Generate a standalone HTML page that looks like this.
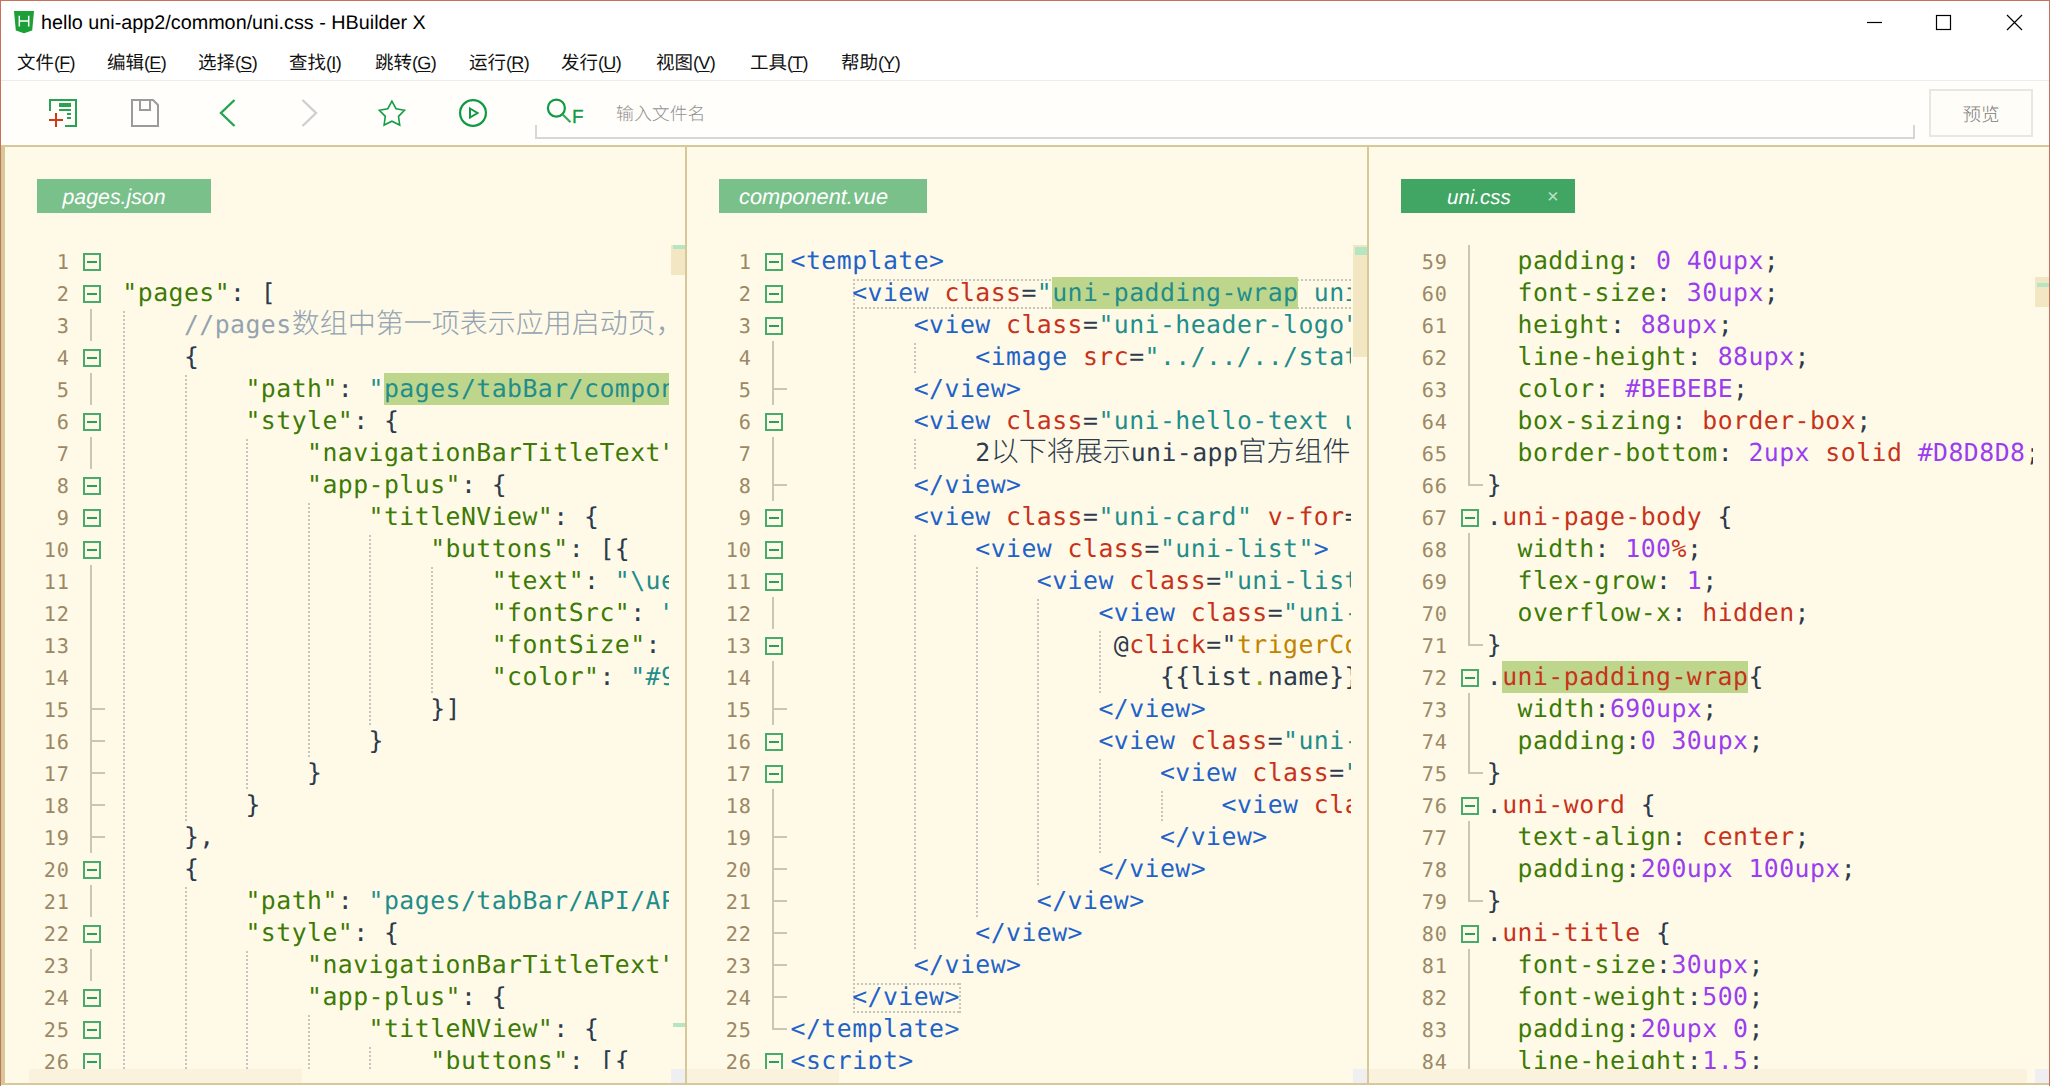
<!DOCTYPE html>
<html lang="zh-CN">
<head>
<meta charset="utf-8">
<title>hello uni-app2/common/uni.css - HBuilder X</title>
<style>
html,body{margin:0;padding:0}
body{width:2050px;height:1086px;overflow:hidden;background:#fff;position:relative;
 font-family:"Liberation Sans","Noto Sans CJK SC",sans-serif;color:#000;text-rendering:geometricPrecision}
b,i{font-weight:normal;font-style:normal}
.abs,.win b,.win div,.win span.abs{position:absolute}
.win{position:absolute;left:0;top:0;width:2050px;height:1086px;overflow:hidden}
/* window frame */
.frame-t{left:0;top:0;width:2050px;height:1px;background:#c9705a}
.frame-l{left:0;top:0;width:1px;height:1086px;background:#c9705a}
.frame-r{left:2049px;top:0;width:1px;height:1086px;background:#c9705a}
/* title */
.title{left:41px;top:9px;height:28px;line-height:28px;font-size:19.8px;color:#000;white-space:nowrap}
.menu{top:49px;height:28px;line-height:28px;font-size:18.5px;white-space:nowrap;color:#111}
.menu u{text-decoration:underline;text-underline-offset:2px;text-decoration-thickness:1px}
.ml{position:static;font-size:18px;letter-spacing:-.7px}
.msep{left:1px;top:80px;width:2048px;height:1px;background:#ececec}
.tbar{left:1px;top:81px;width:2048px;height:64px;background:#fffefa}
.edge-t{left:1px;top:145px;width:2048px;height:2px;background:#d6c899}
.edge-l{left:1px;top:145px;width:4px;height:940px;background:#d6c899}
.edge-b{left:1px;top:1083px;width:2048px;height:2px;background:#d6c899}
.edbg{left:5px;top:147px;width:2044px;height:936px;background:#fffae8}
.split{top:147px;width:2px;height:936px;background:#d6c899}
.tab{top:179px;height:34px;line-height:36.5px;color:#fff;font-style:italic;font-size:21px;white-space:nowrap;background:#79c08b}
.tab span{position:absolute;top:0}
.tab.on{background:#41a663}
/* scrollbars */
.vth{width:14px;background:#f3e6c3}
.mk{background:#b4e6c4}
.hth{top:1069px;height:14px;background:#faf2dc}
.cor{top:1069px;width:14px;height:14px;background:#efeff1}
/* editor */
.ed{left:0;top:245px;width:2050px;height:824px;overflow:hidden}
.nums{top:.5px;text-align:right;font-family:"DejaVu Sans Mono", "Liberation Mono", monospace;font-size:20.2px;letter-spacing:1px;color:#9b8966}
.nums div{position:static;height:32px;line-height:32px}
.fb{width:14px;height:14px;border:2px solid #47ac6a}
.fb:after{content:"";position:absolute;left:2px;top:6px;width:10px;height:2px;background:#2aa054}
.fv{width:2px;height:32px;background:#c9c6b8}
.fh{width:13px;height:2px;background:#c9c6b8}
.code{top:0;height:824px;overflow:hidden}
.ln{height:32px;line-height:32px;white-space:pre;font-family:"DejaVu Sans Mono", "Liberation Mono", monospace;font-size:24.8px;letter-spacing:.459px;color:#2c3b4d}
.ln span{position:static}
  .z{letter-spacing:0;font-family:"Noto Sans CJK SC",sans-serif;font-size:28px;font-weight:300;line-height:0}
.ig{width:2px;background-image:linear-gradient(#c6c6c0 50%,transparent 50%);background-size:2px 4px;background-position:0 2px}
.tb{height:30px;background:linear-gradient(90deg,#c6c6ba 50%,transparent 50%) 0 0/4px 2px repeat-x,linear-gradient(90deg,#c6c6ba 50%,transparent 50%) 0 100%/4px 2px repeat-x,linear-gradient(#c6c6ba 50%,transparent 50%) 0 0/2px 4px repeat-y,linear-gradient(#c6c6ba 50%,transparent 50%) 100% 0/2px 4px repeat-y}
.k{color:#3d7a06}.p{color:#2c3b4d}.s{color:#1f8d8b}.c{color:#93a2b1}.t{color:#1f63c9}.a{color:#c8321a}
.n{color:#9a3df0}.o{color:#c18401}.d{color:#2c3b4d}.dot{color:#8a9a05}
.hl{background:#bdd68c;display:inline-block;height:32px;line-height:32px;vertical-align:top}
</style>
</head>
<body>
<div class="win">
<div class="edbg"></div>
<div class="tbar"></div>
<div class="msep"></div>
<div class="edge-t"></div><div class="edge-l"></div><div class="edge-b"></div>
<div class="split" style="left:685px"></div><div class="split" style="left:1367px"></div>

<!-- title bar -->
<svg class="abs" style="left:13px;top:10px" width="24" height="24" viewBox="0 0 24 24"><path d="M1 1h20l-1.800 19.500-8.200 2.700-8.200-2.700z" fill="#1d9f38"/><path d="M6.300 5.800v10.600M15.700 5.800v10.600M6.300 11h9.400" stroke="#fff" stroke-width="1.500" fill="none"/></svg>
<div class="title">hello uni-app2/common/uni.css - HBuilder X</div>
<svg class="abs" style="left:1860px;top:10px" width="170" height="26" viewBox="0 0 170 26" fill="none" stroke="#000" stroke-width="1.200"><path d="M7 12.500h15"/><rect x="76.500" y="5.500" width="14" height="14"/><path d="M147 5l15 15M162 5l-15 15"/></svg>

<!-- menu -->
<div class="menu" style="left:17px">文件<span class="ml">(<u>F</u>)</span></div>
<div class="menu" style="left:107px">编辑<span class="ml">(<u>E</u>)</span></div>
<div class="menu" style="left:198px">选择<span class="ml">(<u>S</u>)</span></div>
<div class="menu" style="left:289px">查找<span class="ml">(<u>I</u>)</span></div>
<div class="menu" style="left:375px">跳转<span class="ml">(<u>G</u>)</span></div>
<div class="menu" style="left:469px">运行<span class="ml">(<u>R</u>)</span></div>
<div class="menu" style="left:561px">发行<span class="ml">(<u>U</u>)</span></div>
<div class="menu" style="left:656px">视图<span class="ml">(<u>V</u>)</span></div>
<div class="menu" style="left:750px">工具<span class="ml">(<u>T</u>)</span></div>
<div class="menu" style="left:841px">帮助<span class="ml">(<u>Y</u>)</span></div>

<!-- toolbar -->
<svg class="abs" style="left:40px;top:90px" width="560" height="46" viewBox="40 90 560 46" fill="none" stroke-width="2">
<!-- new file -->
<g stroke="#26a453"><path d="M50 111V100H76V126H65"/><path d="M59 105h12" stroke-width="4"/><path d="M59 110h12"/><path d="M67 114h4M67 118h4"/></g>
<path d="M56 113v14M49 120h14" stroke="#d2391b"/>
<!-- save -->
<path d="M132 100h21l5 5v21h-26zM140 100v10h10v-10" stroke="#9b9b9b"/>
<!-- back / forward -->
<path d="M234.500 100L221 113l13.500 13" stroke="#26a453" stroke-width="2.400"/>
<path d="M302.500 100L316 113l-13.500 13" stroke="#cfcfcf" stroke-width="2.400"/>
<!-- star -->
<path d="M391.9 101.1 L396.0 108.7 L404.5 110.2 L398.5 116.4 L399.7 125.0 L391.9 121.2 L384.1 125.0 L385.3 116.4 L379.3 110.2 L387.8 108.7Z" stroke="#169c47" stroke-width="1.600" stroke-linejoin="miter"/>
<!-- run -->
<circle cx="473" cy="113" r="12.900" stroke="#109a43" stroke-width="2.200"/><path d="M470 108.500L477.500 113L470 117.500Z" stroke="#109a43"/>
<!-- search -->
<circle cx="556.400" cy="108.100" r="8.500" stroke="#109a43" stroke-width="2.200"/><path d="M562.500 114.300l8 8" stroke="#35a75f" stroke-width="2.200"/>
</svg>
<div class="abs" style="left:572px;top:106.5px;height:22px;line-height:22px;font-size:19px;color:#109a43;-webkit-text-stroke:.3px #109a43">F</div>
<div class="abs" style="left:535px;top:125px;width:2px;height:14px;background:#d6d6d8"></div>
<div class="abs" style="left:535px;top:137px;width:1380px;height:2px;background:#d6d6d8"></div>
<div class="abs" style="left:1913px;top:125px;width:2px;height:14px;background:#d6d6d8"></div>
<div class="abs" style="left:616px;top:101px;height:26px;line-height:26px;font-size:17.900px;font-weight:300;color:#929292;white-space:nowrap">输入文件名</div>
<div class="abs" style="left:1929px;top:89px;width:100px;height:44px;border:2px solid #e9e7e1;background:#fffdf7;line-height:48px;text-align:center;font-size:18.500px;font-weight:300;color:#7c7c7c">预览</div>


<!-- tabs -->
<div class="tab" style="left:37px;width:174px"><span style="left:25.5px;font-size:21.3px">pages.json</span></div>
<div class="tab" style="left:719px;width:208px"><span style="left:20px;font-size:21.8px">component.vue</span></div>
<div class="tab on" style="left:1401px;width:174px"><span style="left:46px;top:1px;font-size:20.5px">uni.css</span><span style="left:146px;top:.3px;font-style:normal;font-size:20px;color:#bfe2ca">×</span></div>

<!-- scrollbars -->
<div class="vth" style="left:671px;top:245px;height:30px"></div><div class="mk" style="left:673px;top:245px;width:12px;height:4px"></div>
<div class="mk" style="left:673px;top:1023px;width:12px;height:4px"></div>
<div class="vth" style="left:1353px;top:245px;height:112px"></div><div class="mk" style="left:1355px;top:247px;width:12px;height:8px"></div>
<div class="vth" style="left:2035px;top:277px;height:30px"></div><div class="mk" style="left:2037px;top:283px;width:12px;height:4px"></div>
<div class="hth" style="left:29px;width:273px"></div><div class="cor" style="left:671px"></div>
<div class="hth" style="left:687px;width:152px"></div><div class="cor" style="left:1353px"></div>
<div class="hth" style="left:1369px;width:658px"></div><div class="cor" style="left:2035px"></div>

<!-- editors -->
<div class="ed">
<div class="nums" style="left:5px;width:65px">
<div>1</div>
<div>2</div>
<div>3</div>
<div>4</div>
<div>5</div>
<div>6</div>
<div>7</div>
<div>8</div>
<div>9</div>
<div>10</div>
<div>11</div>
<div>12</div>
<div>13</div>
<div>14</div>
<div>15</div>
<div>16</div>
<div>17</div>
<div>18</div>
<div>19</div>
<div>20</div>
<div>21</div>
<div>22</div>
<div>23</div>
<div>24</div>
<div>25</div>
<div>26</div>
</div>
<b class="fb" style="left:83px;top:8px"></b>
<b class="fb" style="left:83px;top:40px"></b>
<b class="fv" style="left:90px;top:64px"></b>
<b class="fb" style="left:83px;top:104px"></b>
<b class="fv" style="left:90px;top:128px"></b>
<b class="fb" style="left:83px;top:168px"></b>
<b class="fv" style="left:90px;top:192px"></b>
<b class="fb" style="left:83px;top:232px"></b>
<b class="fb" style="left:83px;top:264px"></b>
<b class="fb" style="left:83px;top:296px"></b>
<b class="fv" style="left:90px;top:320px"></b>
<b class="fv" style="left:90px;top:352px"></b>
<b class="fv" style="left:90px;top:384px"></b>
<b class="fv" style="left:90px;top:416px"></b>
<b class="fv" style="left:90px;top:448px"></b>
<b class="fh" style="left:92px;top:463px"></b>
<b class="fv" style="left:90px;top:480px"></b>
<b class="fh" style="left:92px;top:495px"></b>
<b class="fv" style="left:90px;top:512px"></b>
<b class="fh" style="left:92px;top:527px"></b>
<b class="fv" style="left:90px;top:544px"></b>
<b class="fh" style="left:92px;top:559px"></b>
<b class="fv" style="left:90px;top:576px"></b>
<b class="fh" style="left:92px;top:591px"></b>
<b class="fb" style="left:83px;top:616px"></b>
<b class="fv" style="left:90px;top:640px"></b>
<b class="fb" style="left:83px;top:680px"></b>
<b class="fv" style="left:90px;top:704px"></b>
<b class="fb" style="left:83px;top:744px"></b>
<b class="fb" style="left:83px;top:776px"></b>
<b class="fb" style="left:83px;top:808px"></b>
<div class="code" style="left:103px;width:566px">
<b class="ig" style="left:20.0px;top:64px;height:768px"></b>
<b class="ig" style="left:82.0px;top:128px;height:448px"></b>
<b class="ig" style="left:82.0px;top:640px;height:192px"></b>
<b class="ig" style="left:143.0px;top:192px;height:352px"></b>
<b class="ig" style="left:143.0px;top:704px;height:128px"></b>
<b class="ig" style="left:205.0px;top:256px;height:256px"></b>
<b class="ig" style="left:205.0px;top:768px;height:64px"></b>
<b class="ig" style="left:266.0px;top:288px;height:192px"></b>
<b class="ig" style="left:266.0px;top:800px;height:32px"></b>
<b class="ig" style="left:328.0px;top:320px;height:128px"></b>
<div class="ln" style="left:-42.20px;top:0px"><span class="p">{</span></div>
<div class="ln" style="left:19.36px;top:32px"><span class="k">"pages"</span><span class="p">: [</span></div>
<div class="ln" style="left:80.92px;top:64px"><span class="c">//pages<i class="z">数组中第一项表示应用启动页，后面顺序随意</i></span></div>
<div class="ln" style="left:80.92px;top:96px"><span class="p">{</span></div>
<div class="ln" style="left:142.48px;top:128px"><span class="k">"path"</span><span class="p">: </span><span class="s">"</span><span class="s hl">pages/tabBar/component/component</span><span class="s">"</span><span class="p">,</span></div>
<div class="ln" style="left:142.48px;top:160px"><span class="k">"style"</span><span class="p">: {</span></div>
<div class="ln" style="left:204.04px;top:192px"><span class="k">"navigationBarTitleText"</span><span class="p">: </span><span class="s">"<i class="z">内置组件</i>"</span><span class="p">,</span></div>
<div class="ln" style="left:204.04px;top:224px"><span class="k">"app-plus"</span><span class="p">: {</span></div>
<div class="ln" style="left:265.60px;top:256px"><span class="k">"titleNView"</span><span class="p">: {</span></div>
<div class="ln" style="left:327.16px;top:288px"><span class="k">"buttons"</span><span class="p">: [{</span></div>
<div class="ln" style="left:388.72px;top:320px"><span class="k">"text"</span><span class="p">: </span><span class="s">"\ue534"</span><span class="p">,</span></div>
<div class="ln" style="left:388.72px;top:352px"><span class="k">"fontSrc"</span><span class="p">: </span><span class="s">"/static/uni.ttf"</span><span class="p">,</span></div>
<div class="ln" style="left:388.72px;top:384px"><span class="k">"fontSize"</span><span class="p">: </span><span class="s">"22px"</span><span class="p">,</span></div>
<div class="ln" style="left:388.72px;top:416px"><span class="k">"color"</span><span class="p">: </span><span class="s">"#999999"</span></div>
<div class="ln" style="left:327.16px;top:448px"><span class="p">}]</span></div>
<div class="ln" style="left:265.60px;top:480px"><span class="p">}</span></div>
<div class="ln" style="left:204.04px;top:512px"><span class="p">}</span></div>
<div class="ln" style="left:142.48px;top:544px"><span class="p">}</span></div>
<div class="ln" style="left:80.92px;top:576px"><span class="p">},</span></div>
<div class="ln" style="left:80.92px;top:608px"><span class="p">{</span></div>
<div class="ln" style="left:142.48px;top:640px"><span class="k">"path"</span><span class="p">: </span><span class="s">"pages/tabBar/API/API"</span><span class="p">,</span></div>
<div class="ln" style="left:142.48px;top:672px"><span class="k">"style"</span><span class="p">: {</span></div>
<div class="ln" style="left:204.04px;top:704px"><span class="k">"navigationBarTitleText"</span><span class="p">: </span><span class="s">"<i class="z">接口</i>"</span><span class="p">,</span></div>
<div class="ln" style="left:204.04px;top:736px"><span class="k">"app-plus"</span><span class="p">: {</span></div>
<div class="ln" style="left:265.60px;top:768px"><span class="k">"titleNView"</span><span class="p">: {</span></div>
<div class="ln" style="left:327.16px;top:800px"><span class="k">"buttons"</span><span class="p">: [{</span></div>
</div>
<div class="nums" style="left:687px;width:65px">
<div>1</div>
<div>2</div>
<div>3</div>
<div>4</div>
<div>5</div>
<div>6</div>
<div>7</div>
<div>8</div>
<div>9</div>
<div>10</div>
<div>11</div>
<div>12</div>
<div>13</div>
<div>14</div>
<div>15</div>
<div>16</div>
<div>17</div>
<div>18</div>
<div>19</div>
<div>20</div>
<div>21</div>
<div>22</div>
<div>23</div>
<div>24</div>
<div>25</div>
<div>26</div>
</div>
<b class="fb" style="left:765px;top:8px"></b>
<b class="fb" style="left:765px;top:40px"></b>
<b class="fb" style="left:765px;top:72px"></b>
<b class="fv" style="left:772px;top:96px"></b>
<b class="fv" style="left:772px;top:128px"></b>
<b class="fh" style="left:774px;top:143px"></b>
<b class="fb" style="left:765px;top:168px"></b>
<b class="fv" style="left:772px;top:192px"></b>
<b class="fv" style="left:772px;top:224px"></b>
<b class="fh" style="left:774px;top:239px"></b>
<b class="fb" style="left:765px;top:264px"></b>
<b class="fb" style="left:765px;top:296px"></b>
<b class="fb" style="left:765px;top:328px"></b>
<b class="fv" style="left:772px;top:352px"></b>
<b class="fb" style="left:765px;top:392px"></b>
<b class="fv" style="left:772px;top:416px"></b>
<b class="fv" style="left:772px;top:448px"></b>
<b class="fh" style="left:774px;top:463px"></b>
<b class="fb" style="left:765px;top:488px"></b>
<b class="fb" style="left:765px;top:520px"></b>
<b class="fv" style="left:772px;top:544px"></b>
<b class="fv" style="left:772px;top:576px"></b>
<b class="fh" style="left:774px;top:591px"></b>
<b class="fv" style="left:772px;top:608px"></b>
<b class="fh" style="left:774px;top:623px"></b>
<b class="fv" style="left:772px;top:640px"></b>
<b class="fh" style="left:774px;top:655px"></b>
<b class="fv" style="left:772px;top:672px"></b>
<b class="fh" style="left:774px;top:687px"></b>
<b class="fv" style="left:772px;top:704px"></b>
<b class="fh" style="left:774px;top:719px"></b>
<b class="fv" style="left:772px;top:736px"></b>
<b class="fh" style="left:774px;top:751px"></b>
<b class="fv" style="left:772px;top:768px;height:17px"></b>
<b class="fh" style="left:774px;top:783px"></b>
<b class="fb" style="left:765px;top:808px"></b>
<div class="code" style="left:785px;width:566px">
<b class="ig" style="left:68.0px;top:64px;height:672px"></b>
<b class="ig" style="left:129.0px;top:96px;height:32px"></b>
<b class="ig" style="left:129.0px;top:192px;height:32px"></b>
<b class="ig" style="left:129.0px;top:288px;height:416px"></b>
<b class="ig" style="left:191.0px;top:320px;height:352px"></b>
<b class="ig" style="left:252.0px;top:352px;height:288px"></b>
<b class="ig" style="left:314.0px;top:384px;height:64px"></b>
<b class="ig" style="left:314.0px;top:512px;height:96px"></b>
<b class="ig" style="left:376.0px;top:544px;height:32px"></b>
<b class="tb" style="left:68px;top:34px;width:693px"></b>
<b class="tb" style="left:68px;top:738px;width:108px"></b>
<div class="ln" style="left:5.60px;top:0px"><span class="t">&lt;template&gt;</span></div>
<div class="ln" style="left:67.16px;top:32px"><span class="t">&lt;view</span><span class="p"> </span><span class="a">class</span><span class="p">=</span><span class="s">"</span><span class="s hl">uni-padding-wrap</span><span class="s"> uni-common-mt"</span><span class="t">&gt;</span></div>
<div class="ln" style="left:128.72px;top:64px"><span class="t">&lt;view</span><span class="p"> </span><span class="a">class</span><span class="p">=</span><span class="s">"uni-header-logo"</span><span class="t">&gt;</span></div>
<div class="ln" style="left:190.28px;top:96px"><span class="t">&lt;image</span><span class="p"> </span><span class="a">src</span><span class="p">=</span><span class="s">"../../../static/componentIndex.png"</span><span class="t">&gt;&lt;/image&gt;</span></div>
<div class="ln" style="left:128.72px;top:128px"><span class="t">&lt;/view&gt;</span></div>
<div class="ln" style="left:128.72px;top:160px"><span class="t">&lt;view</span><span class="p"> </span><span class="a">class</span><span class="p">=</span><span class="s">"uni-hello-text uni-center"</span><span class="t">&gt;</span></div>
<div class="ln" style="left:190.28px;top:192px"><span class="d">2<i class="z">以下将展示</i>uni-app<i class="z">官方组件，这些组件为</i> uni-app<i class="z">内置，可直接使用。</i></span></div>
<div class="ln" style="left:128.72px;top:224px"><span class="t">&lt;/view&gt;</span></div>
<div class="ln" style="left:128.72px;top:256px"><span class="t">&lt;view</span><span class="p"> </span><span class="a">class</span><span class="p">=</span><span class="s">"uni-card"</span><span class="p"> </span><span class="a">v-for</span><span class="p">=</span><span class="p">"</span><span class="o">(list,index) in lists</span><span class="p">"</span><span class="p"> </span><span class="a">:key</span><span class="p">="</span><span class="o">index</span><span class="p">"</span><span class="t">&gt;</span></div>
<div class="ln" style="left:190.28px;top:288px"><span class="t">&lt;view</span><span class="p"> </span><span class="a">class</span><span class="p">=</span><span class="s">"uni-list"</span><span class="t">&gt;</span></div>
<div class="ln" style="left:251.84px;top:320px"><span class="t">&lt;view</span><span class="p"> </span><span class="a">class</span><span class="p">=</span><span class="s">"uni-list-cell uni-collapse"</span><span class="t">&gt;</span></div>
<div class="ln" style="left:313.40px;top:352px"><span class="t">&lt;view</span><span class="p"> </span><span class="a">class</span><span class="p">=</span><span class="s">"uni-list-cell-navigate uni-navigate-bottom"</span><span class="p"> </span><span class="a">hover-class</span><span class="p">=</span><span class="s">"uni-list-cell-hover"</span></div>
<div class="ln" style="left:328.79px;top:384px"><span class="p">@</span><span class="a">click</span><span class="p">="</span><span class="o">trigerCollapse(index)</span><span class="p">"</span><span class="t">&gt;</span></div>
<div class="ln" style="left:374.96px;top:416px"><span class="d">{{list</span><span class="dot">.</span><span class="d">name}}</span></div>
<div class="ln" style="left:313.40px;top:448px"><span class="t">&lt;/view&gt;</span></div>
<div class="ln" style="left:313.40px;top:480px"><span class="t">&lt;view</span><span class="p"> </span><span class="a">class</span><span class="p">=</span><span class="s">"uni-list-cell-left uni-collapse"</span><span class="t">&gt;</span></div>
<div class="ln" style="left:374.96px;top:512px"><span class="t">&lt;view</span><span class="p"> </span><span class="a">class</span><span class="p">=</span><span class="s">"uni-list-cell"</span><span class="p"> </span><span class="a">v-for</span><span class="p">="</span><span class="o">(item,key) in list.pages</span><span class="p">"</span><span class="t">&gt;</span></div>
<div class="ln" style="left:436.52px;top:544px"><span class="t">&lt;view</span><span class="p"> </span><span class="a">class</span><span class="p">=</span><span class="s">"uni-list-cell-navigate uni-navigate-right"</span><span class="t">&gt;</span></div>
<div class="ln" style="left:374.96px;top:576px"><span class="t">&lt;/view&gt;</span></div>
<div class="ln" style="left:313.40px;top:608px"><span class="t">&lt;/view&gt;</span></div>
<div class="ln" style="left:251.84px;top:640px"><span class="t">&lt;/view&gt;</span></div>
<div class="ln" style="left:190.28px;top:672px"><span class="t">&lt;/view&gt;</span></div>
<div class="ln" style="left:128.72px;top:704px"><span class="t">&lt;/view&gt;</span></div>
<div class="ln" style="left:67.16px;top:736px"><span class="t">&lt;/view&gt;</span></div>
<div class="ln" style="left:5.60px;top:768px"><span class="t">&lt;/template&gt;</span></div>
<div class="ln" style="left:5.60px;top:800px"><span class="t">&lt;script&gt;</span></div>
</div>
<div class="nums" style="left:1369px;width:79px">
<div>59</div>
<div>60</div>
<div>61</div>
<div>62</div>
<div>63</div>
<div>64</div>
<div>65</div>
<div>66</div>
<div>67</div>
<div>68</div>
<div>69</div>
<div>70</div>
<div>71</div>
<div>72</div>
<div>73</div>
<div>74</div>
<div>75</div>
<div>76</div>
<div>77</div>
<div>78</div>
<div>79</div>
<div>80</div>
<div>81</div>
<div>82</div>
<div>83</div>
<div>84</div>
</div>
<b class="fv" style="left:1468px;top:0px"></b>
<b class="fv" style="left:1468px;top:32px"></b>
<b class="fv" style="left:1468px;top:64px"></b>
<b class="fv" style="left:1468px;top:96px"></b>
<b class="fv" style="left:1468px;top:128px"></b>
<b class="fv" style="left:1468px;top:160px"></b>
<b class="fv" style="left:1468px;top:192px"></b>
<b class="fv" style="left:1468px;top:224px;height:17px"></b>
<b class="fh" style="left:1470px;top:239px"></b>
<b class="fb" style="left:1461px;top:264px"></b>
<b class="fv" style="left:1468px;top:288px"></b>
<b class="fv" style="left:1468px;top:320px"></b>
<b class="fv" style="left:1468px;top:352px"></b>
<b class="fv" style="left:1468px;top:384px;height:17px"></b>
<b class="fh" style="left:1470px;top:399px"></b>
<b class="fb" style="left:1461px;top:424px"></b>
<b class="fv" style="left:1468px;top:448px"></b>
<b class="fv" style="left:1468px;top:480px"></b>
<b class="fv" style="left:1468px;top:512px;height:17px"></b>
<b class="fh" style="left:1470px;top:527px"></b>
<b class="fb" style="left:1461px;top:552px"></b>
<b class="fv" style="left:1468px;top:576px"></b>
<b class="fv" style="left:1468px;top:608px"></b>
<b class="fv" style="left:1468px;top:640px;height:17px"></b>
<b class="fh" style="left:1470px;top:655px"></b>
<b class="fb" style="left:1461px;top:680px"></b>
<b class="fv" style="left:1468px;top:704px"></b>
<b class="fv" style="left:1468px;top:736px"></b>
<b class="fv" style="left:1468px;top:768px"></b>
<b class="fv" style="left:1468px;top:800px"></b>
<div class="code" style="left:1481px;width:552px">
<div class="ln" style="left:36.58px;top:0px"><span class="k">padding</span><span class="p">: </span><span class="n">0 40upx</span><span class="p">;</span></div>
<div class="ln" style="left:36.58px;top:32px"><span class="k">font-size</span><span class="p">: </span><span class="n">30upx</span><span class="p">;</span></div>
<div class="ln" style="left:36.58px;top:64px"><span class="k">height</span><span class="p">: </span><span class="n">88upx</span><span class="p">;</span></div>
<div class="ln" style="left:36.58px;top:96px"><span class="k">line-height</span><span class="p">: </span><span class="n">88upx</span><span class="p">;</span></div>
<div class="ln" style="left:36.58px;top:128px"><span class="k">color</span><span class="p">: </span><span class="n">#BEBEBE</span><span class="p">;</span></div>
<div class="ln" style="left:36.58px;top:160px"><span class="k">box-sizing</span><span class="p">: </span><span class="a">border-box</span><span class="p">;</span></div>
<div class="ln" style="left:36.58px;top:192px"><span class="k">border-bottom</span><span class="p">: </span><span class="n">2upx</span><span class="p"> </span><span class="a">solid</span><span class="p"> </span><span class="n">#D8D8D8</span><span class="p">;</span></div>
<div class="ln" style="left:5.80px;top:224px"><span class="p">}</span></div>
<div class="ln" style="left:5.80px;top:256px"><span class="p">.</span><span class="a">uni-page-body</span><span class="p"> {</span></div>
<div class="ln" style="left:36.58px;top:288px"><span class="k">width</span><span class="p">: </span><span class="n">100</span><span class="a">%</span><span class="p">;</span></div>
<div class="ln" style="left:36.58px;top:320px"><span class="k">flex-grow</span><span class="p">: </span><span class="n">1</span><span class="p">;</span></div>
<div class="ln" style="left:36.58px;top:352px"><span class="k">overflow-x</span><span class="p">: </span><span class="a">hidden</span><span class="p">;</span></div>
<div class="ln" style="left:5.80px;top:384px"><span class="p">}</span></div>
<div class="ln" style="left:5.80px;top:416px"><span class="p">.</span><span class="a hl">uni-padding-wrap</span><span class="p">{</span></div>
<div class="ln" style="left:36.58px;top:448px"><span class="k">width</span><span class="p">:</span><span class="n">690upx</span><span class="p">;</span></div>
<div class="ln" style="left:36.58px;top:480px"><span class="k">padding</span><span class="p">:</span><span class="n">0 30upx</span><span class="p">;</span></div>
<div class="ln" style="left:5.80px;top:512px"><span class="p">}</span></div>
<div class="ln" style="left:5.80px;top:544px"><span class="p">.</span><span class="a">uni-word</span><span class="p"> {</span></div>
<div class="ln" style="left:36.58px;top:576px"><span class="k">text-align</span><span class="p">: </span><span class="a">center</span><span class="p">;</span></div>
<div class="ln" style="left:36.58px;top:608px"><span class="k">padding</span><span class="p">:</span><span class="n">200upx 100upx</span><span class="p">;</span></div>
<div class="ln" style="left:5.80px;top:640px"><span class="p">}</span></div>
<div class="ln" style="left:5.80px;top:672px"><span class="p">.</span><span class="a">uni-title</span><span class="p"> {</span></div>
<div class="ln" style="left:36.58px;top:704px"><span class="k">font-size</span><span class="p">:</span><span class="n">30upx</span><span class="p">;</span></div>
<div class="ln" style="left:36.58px;top:736px"><span class="k">font-weight</span><span class="p">:</span><span class="n">500</span><span class="p">;</span></div>
<div class="ln" style="left:36.58px;top:768px"><span class="k">padding</span><span class="p">:</span><span class="n">20upx 0</span><span class="p">;</span></div>
<div class="ln" style="left:36.58px;top:800px"><span class="k">line-height</span><span class="p">:</span><span class="n">1.5</span><span class="p">;</span></div>
</div>
</div>

<div class="frame-t"></div><div class="frame-l"></div><div class="frame-r"></div>
</div>
</body>
</html>
